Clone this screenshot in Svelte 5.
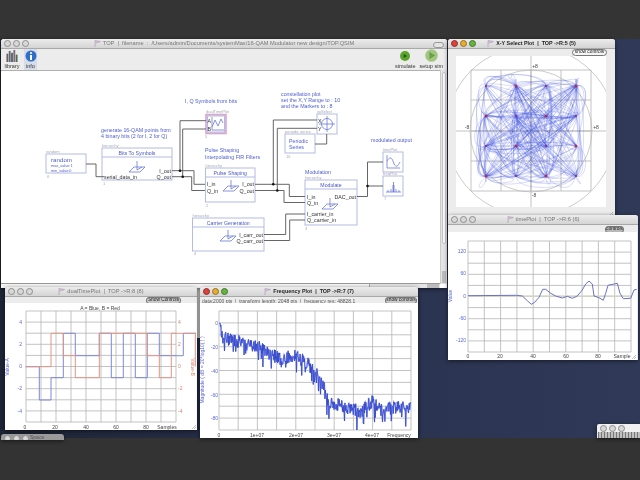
<script>
  function rng(seed) {
    let s = seed;
    return () => {
      s = (s * 1664525 + 1013904223) % 4294967296;
      return s / 4294967296;
    };
  }
  const range = (a, b, n) => Array.from({ length: n + 1 }, (_, i) => a + ((b - a) * i) / n);

  // X-Y plot
  const cx = 532, cy = 131;
  const lv = [-45, -15, 15, 45];
  const markers = [];
  lv.forEach((a, i) => lv.forEach((b, j) => {
    markers.push({ x: cx + a, y: cy + b, r: (i + j) % 2 === 1 ? 1.5 : 1 });
  }));
  function trajectories() {
    const r = rng(7);
    const pts = [];
    for (let i = 0; i < 320; i++) {
      const ix = Math.floor(r() * 4), iy = Math.floor(r() * 4);
      pts.push([cx + lv[ix], cy + lv[iy]]);
    }
    let d = `M${pts[0][0]} ${pts[0][1]}`;
    for (let i = 1; i < pts.length - 2; i++) {
      const p0 = pts[i - 1], p1 = pts[i], p2 = pts[i + 1], p3 = pts[i + 2];
      const k = 0.17;
      d += `C${(p1[0] + (p2[0] - p0[0]) * k).toFixed(1)} ${(p1[1] + (p2[1] - p0[1]) * k).toFixed(1)} ${(p2[0] - (p3[0] - p1[0]) * k).toFixed(1)} ${(p2[1] - (p3[1] - p1[1]) * k).toFixed(1)} ${p2[0]} ${p2[1]}`;
    }
    return d;
  }
  const traj = trajectories();

  // Time plot (page coords derived from a 3x crop)
  const timePts = [[72,257],[218,256],[235,258],[250,272],[262,283],[272,277],[285,262],[296,238],[305,238],[320,250],[335,258],[355,264],[370,259],[385,265],[400,258],[415,240],[425,222],[435,213],[445,222],[450,258],[465,263],[478,271],[485,250],[492,226],[510,222],[520,220],[528,250],[538,266],[560,265],[570,240],[578,238]]
    .map(([x, y]) => `${(445 + x / 3).toFixed(1)},${(210 + y / 3).toFixed(1)}`).join(' ');

  // Dual plot
  const conv = (pts) => pts.map(([x, y]) => `${(x / 3).toFixed(1)},${(285 + y / 3).toFixed(1)}`).join(' ');
  const blue = conv([[77,245],[118,245],[118,345],[153,345],[153,278],[190,278],[190,145],[226,145],[226,212],[298,212],[298,145],[334,145],[334,278],[370,278],[370,145],[406,145],[406,278],[442,278],[442,145],[478,145],[478,212],[550,212],[550,145],[588,145]]);
  const red = conv([[77,245],[153,245],[153,145],[190,145],[190,212],[226,212],[226,278],[298,278],[298,145],[442,145],[442,212],[478,212],[478,278],[514,278],[514,145],[586,145],[586,245]]);

  // Frequency plot
  const env = [[73,115],[85,160],[130,170],[190,185],[250,220],[300,215],[340,235],[365,265],[385,300],[400,350],[450,365],[500,380],[530,350],[560,375],[600,365],[647,370]];
  function envAt(x) {
    for (let i = 1; i < env.length; i++) {
      if (x <= env[i][0]) {
        const [a, b] = env[i - 1], [c, d] = env[i];
        return b + ((d - b) * (x - a)) / (c - a);
      }
    }
    return 370;
  }
  function freqLine() {
    const r = rng(21);
    const out = [];
    for (let x = 73; x <= 647; x += 1.2) {
      let y = envAt(x) + (r() - 0.5) * 40;
      if (r() < 0.12) y += 18 + r() * 30;
      if (x < 76) y = 115;
      out.push(`${(195 + x / 3).toFixed(1)},${(285 + Math.min(y, 435) / 3).toFixed(1)}`);
    }
    return out.join(' ');
  }
  const freq = freqLine();

  const boxes = [
    { x: 46, y: 154, w: 40, h: 19, cap: 'random', cy: 152.5 },
    { x: 102, y: 148, w: 70, h: 32, cap: 'hierarchy', cy: 146.5, head: 'Bits To Symbols' },
    { x: 205.5, y: 168, w: 49.5, h: 34, cap: 'hierarchy', cy: 166.5, head: 'Pulse Shaping' },
    { x: 192.5, y: 218, w: 71.5, h: 33, cap: 'hierarchy', cy: 216.5, head: 'Carrier Generation' },
    { x: 305, y: 180, w: 52, h: 45, cap: 'hierarchy', cy: 178.5, head: 'Modulate' },
    { x: 285, y: 134, w: 30, h: 19, cap: 'periodic series', cy: 132.5 },
    { x: 317, y: 114, w: 20, h: 20, cap: 'xySelect', cy: 112.5 },
    { x: 383, y: 152, w: 20, h: 20, cap: 'timePlot', cy: 150.5 },
    { x: 383, y: 176, w: 20, h: 20, cap: 'freqPlot', cy: 174.5 }
  ];
  const notes = [
    { x: 185, y: 102.5, t: 'I, Q Symbols from bits' },
    { x: 101, y: 131.5, t: 'generate 16-QAM points from' },
    { x: 101, y: 138, t: '4 binary bits (2 for I, 2 for Q)' },
    { x: 205, y: 152, t: 'Pulse Shaping' },
    { x: 205, y: 158.5, t: 'Interpolating FIR Filters' },
    { x: 281, y: 95.5, t: 'constellation plot' },
    { x: 281, y: 102, t: 'set the X,Y Range to : 10' },
    { x: 281, y: 108, t: 'and the Markers to : 8' },
    { x: 371, y: 142, t: 'modulated output' },
    { x: 305, y: 174, t: 'Modulation' },
    { x: 51, y: 161.5, t: 'random', big: true },
    { x: 289, y: 143, t: 'Periodic' },
    { x: 289, y: 149, t: 'Series' }
  ];
  const portsL = [
    { x: 104, y: 178.5, t: 'serial_data_in' }, { x: 207, y: 186, t: 'I_in' }, { x: 207, y: 192.5, t: 'Q_in' },
    { x: 307, y: 198.5, t: 'I_in' }, { x: 307, y: 204.5, t: 'Q_in' }, { x: 307, y: 216, t: 'I_carrier_in' }, { x: 307, y: 222, t: 'Q_carrier_in' }
  ];
  const portsR = [
    { x: 171, y: 172.5, t: 'I_out' }, { x: 171, y: 178.5, t: 'Q_out' }, { x: 254, y: 186, t: 'I_out' }, { x: 254, y: 192.5, t: 'Q_out' },
    { x: 263, y: 236.5, t: 'I_carr_out' }, { x: 263, y: 242.5, t: 'Q_carr_out' }, { x: 356, y: 198.5, t: 'DAC_out' }
  ];
  const wires = [
    '86,164 96,164 96,176.7 104,176.7',
    '172,170.7 194,170.7 194,184.3 205,184.3',
    '172,176.7 191.7,176.7 191.7,190.5 205,190.5',
    '180,170.7 180,120.7 206,120.7',
    '182.7,176.7 182.7,129 206,129',
    '255,184.3 289.3,184.3 289.3,196.5 305,196.5',
    '255,190.5 284,190.5 284,202.5 305,202.5',
    '273.3,184.3 273.3,120 317,120',
    '277.3,190.5 277.3,128.3 317,128.3',
    '315,144 326.7,144 326.7,134',
    '264,234.5 285.7,234.5 285.7,214 305,214',
    '264,240.5 289.7,240.5 289.7,220 305,220',
    '357,196.5 367.5,196.5 367.5,162 383,162',
    '367.5,186 383,186'
  ];
  const dots = [[180,170.7],[182.7,176.7],[273.3,184.3],[277.3,190.5],[367.5,186]];
  const symbols = [[137,168],[231,187],[228,237],[330,205]];
</script>

{#snippet flag()}
  <svg class="flag" viewBox="0 0 7 7"><path d="M1 7V0.5L6.5 1.5L2 3" /></svg>
{/snippet}

{#snippet lights(active)}
  <div class="lights">
    <i class={active ? 'l-red' : ''}></i><i class={active ? 'l-yel' : ''}></i><i class={active ? 'l-grn' : ''}></i>
  </div>
{/snippet}

{#snippet titlebar(text, active)}
  <div class="titlebar">
    {@render lights(active)}
    <div class="title" class:title-on={active}>{@render flag()}<span>{text}</span></div>
  </div>
{/snippet}

{#snippet grid(xs, ys, y0, y1, x0, x1)}
  {#each xs as x}<line class="grid" x1={x} x2={x} y1={y0} y2={y1} />{/each}
  {#each ys as y}<line class="grid" x1={x0} x2={x1} y1={y} y2={y} />{/each}
{/snippet}

<div class="screen">
  <div class="strip-top"></div>
  <div class="desk"></div>
  <div class="strip-bottom"></div>

  <div class="behind"></div>

  <!-- main design window -->
  <section class="win w-main">
    {@render titlebar('TOP  |  filename  :  /Users/admin/Documents/systemMax/16-QAM Modulator new design/TOP.QSIM', false)}
    <div class="pill-zoom"></div>
    <div class="toolbar">
      <div class="tool t-lib">
        <svg class="tool-ico" viewBox="0 0 12 13">
          <rect x="0" y="4" width="2" height="9" fill="#7a5a5a" /><rect x="2.5" y="1" width="2" height="12" fill="#556f7a" />
          <rect x="5" y="3" width="2" height="10" fill="#5e5e5e" /><rect x="7.5" y="0" width="2" height="13" fill="#7c6a7c" /><rect x="10" y="5" width="2" height="8" fill="#4d6a55" />
        </svg>
        <span>library</span>
      </div>
      <div class="tool t-info">
        <svg class="tool-ico" viewBox="0 0 12 12">
          <circle cx="6" cy="6" r="5.5" fill="#2f6fc8" /><rect x="5" y="5" width="2" height="5" fill="#fff" /><circle cx="6" cy="3" r="1.1" fill="#fff" />
        </svg>
        <span>info</span>
      </div>
      <div class="spacer"></div>
      <div class="tool">
        <svg class="tool-ico" viewBox="0 0 12 12">
          <circle cx="6" cy="6" r="5" fill="#5aa52c" /><path d="M4.7 4 8 6 4.7 8Z" fill="#24521a" />
        </svg>
        <span>simulate</span>
      </div>
      <div class="tool">
        <svg class="tool-ico big" viewBox="0 0 12 12">
          <circle cx="6" cy="6" r="5.8" fill="#a3c67e" /><path d="M4 2.6 9.5 6 4 9.4Z" fill="#6d9e52" />
        </svg>
        <span>setup sim</span>
      </div>
    </div>
    <svg class="diagram" viewBox="1 70 439 214">
      {#each boxes as b}
        <text class="cap" x={b.x} y={b.cy}>{b.cap}</text>
        <rect class="box" x={b.x} y={b.y} width={b.w} height={b.h} />
        {#if b.head}
          <line class="box" x1={b.x} x2={b.x + b.w} y1={b.y + 9} y2={b.y + 9} />
          <text class="head" x={b.x + b.w / 2} y={b.y + 7}>{b.head}</text>
        {/if}
      {/each}

      {#each symbols as [x, y]}
        <path class="sym" d="M{x - 8} {y + 4}L{x - 3} {y - 1}H{x + 8}L{x + 3} {y + 4}ZM{x} {y + 2}V{y - 7}M{x} {y + 2}L{x + 5} {y - 1}" />
      {/each}

      {#each notes as n}
        <text class={n.big ? 'note big' : 'note'} x={n.x} y={n.y}>{n.t}</text>
      {/each}
      <text class="tiny" x="51" y="167">max_value:1</text>
      <text class="tiny" x="51" y="171.5">min_value:0</text>

      {#each portsL as p}<text class="port" x={p.x} y={p.y}>{p.t}</text>{/each}
      {#each portsR as p}<text class="port end" x={p.x} y={p.y}>{p.t}</text>{/each}

      <!-- dual plot node -->
      <text class="cap" x="206" y="113">dualTimePlot</text>
      <rect class="pink-o" x="206" y="114.5" width="20" height="19" />
      <rect class="box" x="207.5" y="116" width="17" height="16" />
      <path class="sym" d="M212 117V130H224M212 127L215 120 218 126 221 119 223 123" />
      <text class="port" x="207.5" y="122.5">A</text>
      <text class="port" x="207.5" y="130.5">B</text>

      <!-- xy node -->
      <circle class="sym" cx="327" cy="124" r="5.5" />
      <path class="sym" d="M319 124H335M327 116V132" />
      <text class="port" x="318" y="122.5">X</text>
      <text class="port" x="318" y="131">Y</text>

      <!-- time plot node -->
      <path class="sym" d="M387 155V168H400M387 161C390 156 392 157 394 164 396 168 398 166 400 162" />
      <!-- frequency plot node -->
      <path class="sym" d="M386 192H401M388 192V190M391 192V189M393.500 192V182M396 192V189M399 192V190" />
      <path class="sym" d="M393 192V185M394 192V185" />

      {#each wires as w}<polyline class="wire" points={w} />{/each}
      {#each dots as [x, y]}<circle class="dot" cx={x} cy={y} r="1.3" />{/each}
      <text class="cap" x="47" y="177.5">0</text>
      <text class="cap" x="103" y="185">1</text>
      <text class="cap" x="206" y="207">2</text>
      <text class="cap" x="194" y="255">4</text>
      <text class="cap" x="305" y="229.500">3</text>
      <text class="cap" x="205" y="138">5</text>
      <text class="cap" x="286" y="158">16</text>
      <text class="cap" x="384" y="200">7</text>
    </svg>
    <div class="vscroll"><div class="vthumb"></div><div class="arrow"></div></div>
    <div class="hscroll"><div class="hthumb"></div><div class="arrow-h"></div></div>
  </section>

  <!-- X-Y plot -->
  <section class="win w-xy">
    {@render titlebar('X-Y Select Plot  |  TOP ->R:5 (5)', true)}
    <button class="ctl ctl-xy">show controls</button>
    <svg class="plot" viewBox="449 47 166 170">
      <defs><clipPath id="xyclip"><rect x="457" y="56" width="150" height="151" /></clipPath></defs>
      <rect x="457" y="56" width="150" height="151" fill="#fff" />
      {@render grid([472, 502, 532, 562, 592], [70, 100, 131, 161, 191], 70, 191, 472, 592)}
      <g clip-path="url(#xyclip)">
        <line class="grid" x1="457" x2="607" y1="131" y2="131" />
        <line class="grid" x1="532" x2="532" y1="56" y2="207" />
        <circle class="ring" cx="532" cy="131" r="61" />
        <circle class="ring" cx="532" cy="131" r="85" />
        <path class="traj" d={traj} />
      </g>
      {#each markers as m}<circle class="mark" cx={m.x} cy={m.y} r={m.r} />{/each}
      <text class="tick mid ink" x="536" y="68">+8</text>
      <text class="tick mid ink" x="468" y="129">-8</text>
      <text class="tick mid ink" x="597" y="129">+8</text>
      <text class="tick mid ink" x="535" y="197">-8</text>
      <path class="grip" d="M614 212 610 216M614 214 612 216" />
    </svg>
  </section>

  <!-- time plot -->
  <section class="win w-time">
    {@render titlebar('timePlot  |  TOP ->R:6 (6)', false)}
    <button class="ctl ctl-time">controls</button>
    <svg class="plot" viewBox="449 224 189 136">
      <rect x="449" y="232" width="189" height="128" fill="#fff" />
      {@render grid(range(469, 632, 10), range(241, 352, 10), 241, 352, 469, 632)}
      <line class="zero" x1="469" x2="632" y1="296" y2="296" />
      <polyline class="trace" points={timePts} />
      {#each [[120, 253], [60, 275], [0, 298], [-60, 320], [-120, 342]] as [t, y]}
        <text class="tick end" x="467" y={y}>{t}</text>
      {/each}
      {#each [[0, 469], [20, 501], [40, 534], [60, 567], [80, 599]] as [t, x]}
        <text class="tick mid ink" x={x} y="358">{t}</text>
      {/each}
      <text class="tick mid ink" x="623" y="358">Sample</text>
      <text class="tick mid" transform="translate(453 296) rotate(-90)">Value</text>
      <path class="grip" d="M637 355 633 359M637 357 635 359" />
    </svg>
  </section>

  <!-- dual plot -->
  <section class="win w-dual">
    {@render titlebar('dualTimePlot  |  TOP ->R:8 (8)', false)}
    <button class="ctl ctl-dual">Show Controls</button>
    <svg class="plot" viewBox="5 295 192 135">
      <rect x="5" y="303" width="192" height="127" fill="#fff" />
      {@render grid(range(26, 176, 10), range(311, 422, 10), 311, 422, 26, 176)}
      <text class="tick mid ink" x="100" y="310">A = Blue, B = Red</text>
      <polyline class="step-b" points={blue} />
      <polyline class="step-r" points={red} />
      {#each [[4, 324], [2, 346], [0, 368], [-2, 390], [-4, 413]] as [t, y]}
        <text class="tick end" x="22" y={y}>{t}</text>
        <text class="tick red" x="178" y={y}>{t}</text>
      {/each}
      {#each [[0, 25], [20, 55], [40, 86], [60, 116], [80, 146]] as [t, x]}
        <text class="tick mid ink" x={x} y="429">{t}</text>
      {/each}
      <text class="tick mid ink" x="167" y="429">Samples</text>
      <text class="tick mid" transform="translate(8.500 367) rotate(-90)">Value-A</text>
      <text class="tick mid red" transform="translate(191 367) rotate(90)">Value-B</text>
      <path class="grip" d="M196 425 192 429M196 427 194 429" />
    </svg>
  </section>

  <!-- frequency plot -->
  <section class="win w-freq">
    {@render titlebar('Frequency Plot  |  TOP ->R:7 (7)', true)}
    <div class="infobar">data:2000 pts  |  transform length: 2048 pts  |  frequency res: 48828.1</div>
    <button class="ctl ctl-freq">show controls</button>
    <svg class="plot" viewBox="200 295 218 143">
      <rect x="200" y="303" width="218" height="135" fill="#fff" />
      {@render grid(range(219, 411, 10), range(311, 430, 10), 311, 430, 219, 411)}
      <polyline class="freq-soft" points={freq} />
      <polyline class="freq" points={freq} />
      {#each [['0', 325], ['-20', 349], ['-40', 373], ['-60', 397], ['-80', 420]] as [t, y]}
        <text class="tick end" x="218" y={y}>{t}</text>
      {/each}
      {#each [['0', 219], ['1e+07', 257], ['2e+07', 296], ['3e+07', 334], ['4e+07', 372]] as [t, x]}
        <text class="tick mid ink" x={x} y="437">{t}</text>
      {/each}
      <text class="tick mid ink" x="399" y="437">Frequency</text>
      <text class="tick mid" transform="translate(204 370) rotate(-90)">Magnitude ( dB = 20*log10( ) )</text>
    </svg>
  </section>

  <!-- windows peeking out at the bottom -->
  <section class="win w-space">
    {@render lights(false)}
    <span class="space-name">Space</span>
  </section>
  <section class="win w-peek">
    {@render lights(false)}
    <div class="ruler"></div>
  </section>
</div>

<style>
  :global(body) { margin: 0; background: #333; }
  .screen {
    position: relative;
    width: 640px;
    height: 480px;
    overflow: hidden;
    display: flex;
    flex-direction: column;
    font-family: "Liberation Sans", Arial, sans-serif;
    filter: blur(0.45px);
  }
  .strip-top { height: 39px; background: #343434; }
  .desk { flex: 1; background: linear-gradient(90deg, #1e2536, #2a3350 60%, #303a58); }
  .strip-bottom { height: 42px; background: #333; }

  .behind { position: absolute; left: 195px; top: 288px; width: 6px; height: 50px; background: #c8c8c8; }

  .win {
    position: absolute;
    background: #ececec;
    border-radius: 3px 3px 0 0;
    box-shadow: 0 1px 4px rgba(0, 0, 0, .55);
    overflow: hidden;
  }
  .w-main { left: 1px; top: 39px; width: 446px; height: 249px; background: #fff; }
  .w-xy { left: 448px; top: 39px; width: 167px; height: 178px; }
  .w-time { left: 448px; top: 215px; width: 190px; height: 145px; }
  .w-dual { left: 5px; top: 287px; width: 192px; height: 143px; }
  .w-freq { left: 200px; top: 287px; width: 218px; height: 151px; }
  .w-space { left: 1px; top: 434px; width: 63px; height: 6px; background: #9a9a9a; }
  .w-peek { left: 597px; top: 424px; width: 43px; height: 14px; background: #f0f0f0; border-radius: 2px 0 0 0; }

  .titlebar {
    height: 9px;
    position: relative;
    background: linear-gradient(#ececec, #d4d4d4);
    border-bottom: 1px solid #a8a8a8;
    display: flex;
    align-items: center;
    justify-content: center;
  }
  .lights { position: absolute; left: 3px; top: 2px; display: flex; gap: 2px; }
  .lights i { width: 5px; height: 5px; border-radius: 50%; background: #d8d8d8; border: 1px solid #8c8c8c; box-sizing: content-box; margin: -1px 0 0; display: block; }
  .lights .l-red { background: #d8443c; border-color: #903028; }
  .lights .l-yel { background: #e4ae32; border-color: #987020; }
  .lights .l-grn { background: #66b23e; border-color: #3f7a28; }
  .title { display: flex; align-items: center; gap: 2px; font-size: 5.7px; color: #777; white-space: pre; line-height: 9px; }
  .title-on { color: #222; font-weight: 700; font-size: 5.4px; }
  .flag { width: 7px; height: 7px; fill: #d8c8dc; stroke: #a898b0; stroke-width: .6; }

  .pill-zoom { position: absolute; right: 3px; top: 3px; width: 9px; height: 4px; border: 1px solid #999; border-radius: 3px; background: #e4e4e4; }

  .toolbar {
    height: 21px;
    background: #ececec;
    border-bottom: 1px solid #b0b0b0;
    display: flex;
    gap: 4px;
    padding: 0 4px 0 4px;
  }
  .spacer { flex: 1; }
  .tool { display: flex; flex-direction: column; align-items: center; justify-content: flex-end; font-size: 5.5px; color: #333; line-height: 7px; white-space: nowrap; }
  .t-lib { width: 14px; }
  .t-info { width: 13px; margin-left: 1px; background: #d6dce8; }
  .tool-ico { width: 12px; height: 12px; margin-bottom: 1px; }
  .tool-ico.big { width: 13px; height: 13px; }

  .diagram { position: absolute; left: 0; top: 31px; width: 439px; height: 214px; }
  .vscroll { position: absolute; right: 0; top: 31px; width: 7px; height: 214px; background: #e4e4e4; border-left: 1px solid #ccc; box-sizing: border-box; }
  .vthumb { height: 170px; margin: 2px 1px 0; background: #f8f8f8; border-radius: 3px; border: 1px solid #c4c4c4; }
  .arrow { position: absolute; bottom: 1px; left: 1px; width: 4px; height: 12px; background: #bcbcbc; }
  .hscroll { position: absolute; left: 0; right: 7px; bottom: 0; height: 4px; background: #e4e4e4; border-top: 1px solid #999; }
  .hthumb { width: 368px; height: 4px; background: #f6f6f6; border-right: 1px solid #aaa; }
  .arrow-h { position: absolute; right: 1px; top: 0; width: 12px; height: 4px; background: #bcbcbc; }

  .box { fill: #fff; stroke: #b4bbe4; stroke-width: 1; }
  line.box { fill: none; }
  .cap { font-size: 4px; fill: #a8a8b4; }
  .head { font-size: 5.2px; fill: #4a58c8; text-anchor: middle; }
  .note { font-size: 5.3px; fill: #5060d0; }
  .note.big { font-size: 6.2px; }
  .tiny { font-size: 3.8px; fill: #5060d0; }
  .port { font-size: 5.3px; fill: #333; }
  .port.end { text-anchor: end; }
  .sym { fill: none; stroke: #6a78d8; stroke-width: .8; }
  .pink-o { fill: #f0d0e4; stroke: #d8a8cc; stroke-width: 1.6; }
  .wire { fill: none; stroke: #666; stroke-width: 1; }
  .dot { fill: #111; }

  .ctl {
    position: absolute;
    padding: 0;
    font: 4.8px/1 "Liberation Sans", Arial, sans-serif;
    white-space: nowrap;
    overflow: hidden;
    color: #222;
    background: #e4e4e4;
    border: 1px solid #777;
    border-radius: 3px;
    height: 7px;
    top: 10px;
  }
  .ctl-xy { left: 124px; width: 35px; border-radius: 4px; background: #f4f4f4; }
  .ctl-time { left: 157px; width: 19px; background: #b8b8b8; top: 11px; }
  .ctl-dual { left: 141px; width: 35px; background: #c8c8c8; }
  .ctl-freq { left: 185px; width: 32px; background: #c8c8c8; }
  .infobar { height: 8px; line-height: 8px; background: #ececec; font-size: 5px; color: #555; padding-left: 2px; white-space: pre; }

  .plot { position: absolute; left: 0; bottom: 0; display: block; }
  .w-xy .plot { width: 166px; height: 170px; }
  .w-time .plot { width: 189px; height: 136px; }
  .w-dual .plot { width: 192px; height: 135px; }
  .w-freq .plot { width: 218px; height: 143px; }

  .grid { stroke: #b4b4b4; stroke-width: .8; }
  .grip { fill: none; stroke: #999; stroke-width: .6; }
  .zero { stroke: #d8d8c8; stroke-width: 1.6; }
  .ring { fill: none; stroke: #b4b4b4; stroke-width: .7; }
  .traj { fill: none; stroke: #3a4ce0; stroke-width: .6; stroke-opacity: .32; }
  .mark { fill: #b02c5c; }
  .trace { fill: none; stroke: #6a72c4; stroke-width: 1; }
  .step-b { fill: none; stroke: #7c88d8; stroke-width: 1; }
  .step-r { fill: none; stroke: #e49484; stroke-width: 1; }
  .freq-soft { fill: none; stroke: #98a6f0; stroke-width: 1.3; }
  .freq { fill: none; stroke: #2f42c8; stroke-width: .7; }
  .tick { font-size: 5px; fill: #5a68d8; }
  .tick.end { text-anchor: end; }
  .tick.mid { text-anchor: middle; }
  .tick.ink { fill: #444; }
  .tick.red { fill: #d88474; }
  .space-name { font-size: 5px; color: #555; line-height: 5px; position: absolute; left: 29px; top: 1px; }
  .ruler { position: absolute; left: 1px; right: 0; top: 8px; height: 6px; background: repeating-linear-gradient(90deg, #777 0 1px, #c0c0c0 1px 3px); }
</style>
